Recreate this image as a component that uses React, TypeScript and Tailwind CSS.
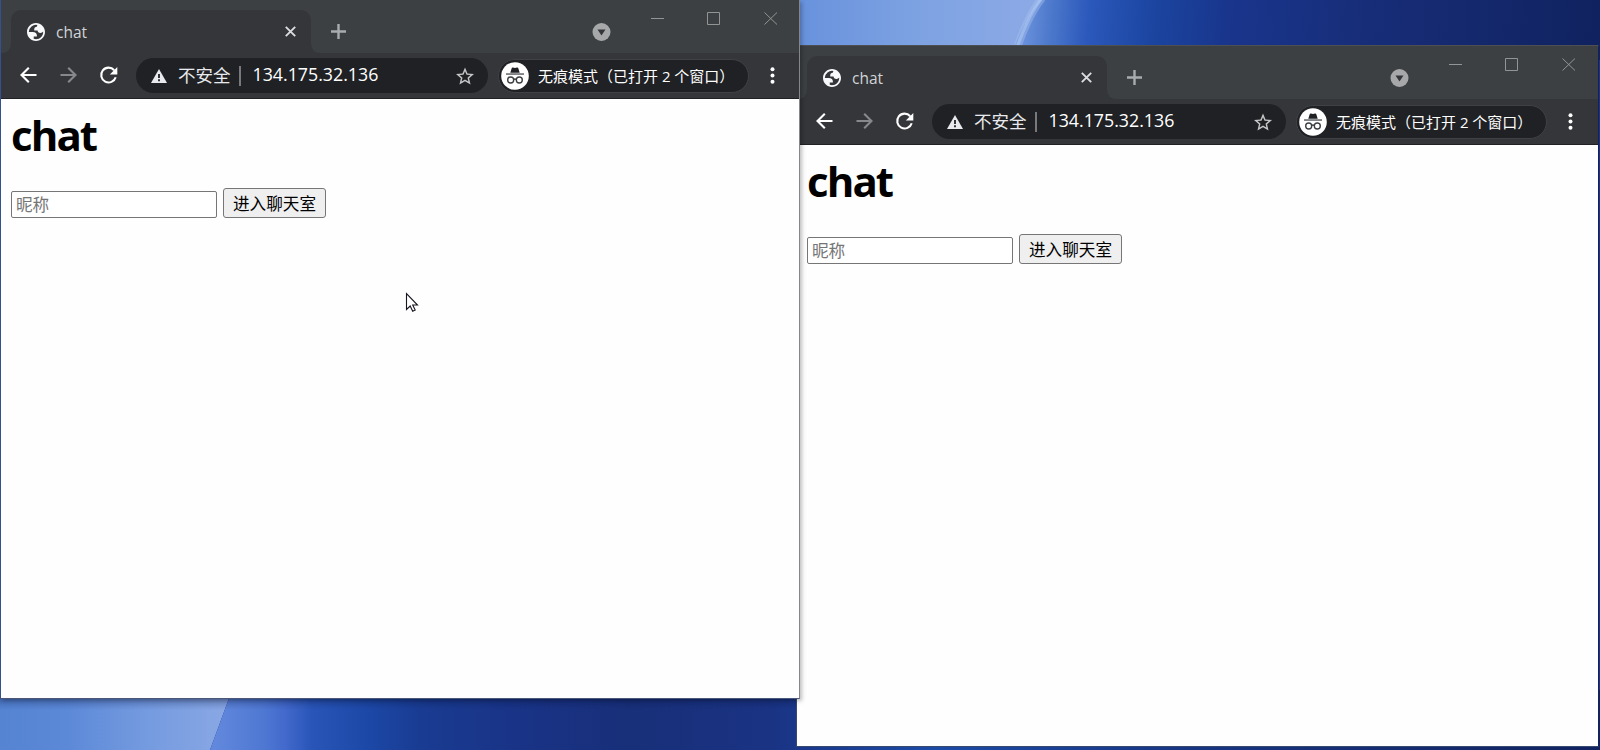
import React from 'react';

const UI = "font-['Open_Sans','Noto_Sans_CJK_SC',sans-serif]";

function Globe() {
  return (
    <svg className="h-[18px] w-[18px] shrink-0" viewBox="2 2 20 20" fill="#f8f9fa">
      <path
        fillRule="evenodd"
        d="M12 2C6.480 2 2 6.480 2 12s4.480 10 10 10 10-4.480 10-10S17.520 2 12 2zM4 12h4.400c3.407.022 4.922 1.730 4.543 5.127H9.488v2.470a8.004 8.004 0 0 0 10.498-8.080C19.327 12.504 18.332 13 17 13c-2.137 0-3.206-.916-3.206-2.750h-3.748c-.274-2.728.683-4.092 2.870-4.092 0-.975.327-1.597.811-1.970A8.004 8.004 0 0 0 4 12z"
      />
    </svg>
  );
}

function Incognito() {
  return (
    <svg className="-ml-px h-7 w-7 shrink-0" viewBox="0 0 28 28">
      <circle cx="14" cy="14" r="13.800" fill="#fff" />
      <path d="M9.300 10.800l1.400-4.600q.3-1 1.300-.7l2 .5 2-.5q1-.3 1.300.7l1.400 4.600z" fill="#202124" />
      <path d="M5 11.300h18v1.500H5z" fill="#5f6368" />
      <g fill="none" stroke="#3c4043" strokeWidth="1.400">
        <circle cx="9.700" cy="18" r="3" />
        <circle cx="18.300" cy="18" r="3" />
        <path d="M12.600 17.500q1.400-1 2.800 0" />
      </g>
    </svg>
  );
}

function WindowControls() {
  return (
    <svg className="mt-3 mr-[21px] h-[13px] w-[127px] shrink-0" viewBox="0 0 127 13" fill="none" stroke="#929594">
      <path d="M0 6.500h13M56.500.5h12v12h-12zM113.500.5l12.500 12M126 .5l-12.500 12" />
    </svg>
  );
}

function TabStrip({ inset }: { inset: string }) {
  return (
    <div className={`flex h-[53px] shrink-0 items-start bg-[#3c4043] ${inset}`}>
      <svg className="mt-[43px] h-[10px] w-[10px] shrink-0" viewBox="0 0 10 10" fill="#35363a">
        <path d="M10 0v10H0Q10 10 10 0z" />
      </svg>
      <div className="mt-[10px] flex h-[43px] w-[300px] shrink-0 items-center rounded-t-[10px] bg-[#35363a] pr-[15px] pl-4">
        <Globe />
        <span className={`ml-[11px] grow pt-[2px] text-[15.500px] leading-none text-[#d2d3d5] ${UI}`}>chat</span>
        <svg className="h-[11px] w-[11px]" viewBox="0 0 11 11" stroke="#dadce0" strokeWidth="1.900">
          <path d="M.8.8l9.400 9.400M10.200.8L.8 10.200" />
        </svg>
      </div>
      <svg className="h-[53px] w-[42px] shrink-0" viewBox="0 0 42 53">
        <path d="M0 43v10h10Q0 53 0 43z" fill="#35363a" />
        <path d="M20 31.500h15M27.500 24v15" stroke="#a9acae" strokeWidth="2.400" />
      </svg>
      <div className="grow" />
      <svg className="mt-[23px] mr-10 h-[18px] w-[19px] shrink-0" viewBox="0 0 19 18">
        <circle cx="9.500" cy="9" r="9" fill="#a7a8aa" />
        <path d="M5.500 6.500h8l-4 6z" fill="#35363a" />
      </svg>
      <WindowControls />
    </div>
  );
}

function Toolbar({ inset }: { inset: string }) {
  return (
    <div className={`flex h-[46px] shrink-0 items-center border-b border-[#202124] bg-[#35363a] ${inset}`}>
      <svg className="h-[45px] w-[135px] shrink-0" viewBox="0 0 135 45" fill="none" strokeWidth="2.100">
        <path d="M35.500 22H20.500M27.800 14.700l-7.300 7.300 7.300 7.300" stroke="#fff" />
        <path d="M59.500 22h15M67.200 14.700l7.300 7.300-7.300 7.300" stroke="#87888b" />
        <path d="M113.200 17.200a7.400 7.400 0 1 0 1.500 7" stroke="#fff" />
        <path d="M116.300 14v7.500h-7.500z" fill="#fff" />
      </svg>
      <div className="flex h-[35px] grow items-center rounded-full bg-[#202124] pr-[14px] pl-[15px]">
        <svg className="h-[14px] w-4 shrink-0" viewBox="0 0 16 14">
          <path d="M8 0l8 14H0z" fill="#e8eaed" />
          <path d="M8 5v4M8 10.300v2" stroke="#202124" strokeWidth="1.800" />
        </svg>
        <span className={`ml-[11px] text-[17.500px] leading-none whitespace-nowrap text-[#e8eaed] ${UI}`}>不安全</span>
        <div className="ml-2 h-5 w-[2px] shrink-0 bg-[#77797c]" />
        <span className={`ml-3 grow pb-px text-[17.800px] leading-none whitespace-nowrap text-white ${UI}`}>134.175.32.136</span>
        <svg className="h-[18px] w-[18px] shrink-0" viewBox="2 2 20 19" fill="#c4c5c7">
          <path d="M22 9.240l-7.190-.62L12 2 9.190 8.630 2 9.240l5.460 4.730L5.820 21 12 17.270 18.180 21l-1.630-7.030L22 9.240zM12 15.400l-3.760 2.270 1-4.280-3.320-2.880 4.380-.38L12 6.100l1.710 4.040 4.380.38-3.320 2.880 1 4.280L12 15.400z" />
        </svg>
      </div>
      <div className="ml-[10px] flex h-[34px] w-[251px] shrink-0 items-center rounded-full border border-[#3f4145] bg-[#202124] pl-[3px]">
        <Incognito />
        <span className={`ml-[9px] pt-[2px] text-[15px] leading-none whitespace-nowrap text-white ${UI}`}>无痕模式（已打开 2 个窗口）</span>
      </div>
      <svg className="mr-6 ml-[21px] h-[17px] w-[5px] shrink-0" viewBox="0 0 5 17" fill="#fff">
        <circle cx="2.500" cy="2.200" r="2" />
        <circle cx="2.500" cy="8.500" r="2" />
        <circle cx="2.500" cy="14.800" r="2" />
      </svg>
    </div>
  );
}

function BrowserWindow({ className, inset = '' }: { className: string; inset?: string }) {
  return (
    <section className={`absolute flex flex-col bg-[#fefefe] ${className}`}>
      <TabStrip inset={inset} />
      <Toolbar inset={inset} />
      <main className={`px-[10px] ${UI}`}>
        <h1 className="mt-[6px] text-[42px] leading-[60px] font-bold tracking-[-1.900px] text-black">chat</h1>
        <div className="mt-[23px] flex items-end gap-[6px]">
          <input
            className="h-[27px] w-[206px] rounded-[2px] border border-[#767676] bg-white px-1 text-[16.600px] placeholder:text-[#757575]"
            placeholder="昵称"
          />
          <button className="h-[30px] w-[103px] rounded-[3px] border border-[#767676] bg-[#efefef] pt-[2px] text-[16.600px] leading-none whitespace-nowrap text-black">
            进入聊天室
          </button>
        </div>
      </main>
    </section>
  );
}

function Desktop() {
  return (
    <div className="flex h-full flex-col justify-between bg-[#1a3384]">
      <svg className="h-[60px] w-full" viewBox="0 0 1600 60" preserveAspectRatio="none">
        <defs>
          <linearGradient id="skyLight" gradientUnits="userSpaceOnUse" x1="800" y1="0" x2="1030" y2="0">
            <stop offset="0" stopColor="#6892dd" />
            <stop offset=".5" stopColor="#7da2e2" />
            <stop offset="1" stopColor="#8ba9e5" />
          </linearGradient>
          <linearGradient id="skyDark" gradientUnits="userSpaceOnUse" x1="1020" y1="0" x2="1600" y2="40">
            <stop offset="0" stopColor="#6f96de" />
            <stop offset=".06" stopColor="#4a76ca" />
            <stop offset=".12" stopColor="#2b58bb" />
            <stop offset=".23" stopColor="#1b45a0" />
            <stop offset=".36" stopColor="#19358c" />
            <stop offset=".6" stopColor="#172d78" />
            <stop offset="1" stopColor="#10225f" />
          </linearGradient>
        </defs>
        <path d="M800 0h245q-20 25-35 60H800z" fill="url(#skyLight)" />
        <path d="M1042 0h558v60h-590q10-35 32-60z" fill="url(#skyDark)" />
        <path d="M1042 -2q-16 20-29 62" fill="none" stroke="#a4bff0" strokeWidth="8" opacity=".45" />
        <path d="M1042 -2q-16 20-29 62" fill="none" stroke="#b4cbf4" strokeWidth="3" opacity=".5" />
      </svg>
      <svg className="h-[60px] w-full" viewBox="0 0 1600 60" preserveAspectRatio="none">
        <defs>
          <linearGradient id="groundLight" gradientUnits="userSpaceOnUse" x1="0" y1="0" x2="230" y2="0">
            <stop offset="0" stopColor="#5584d3" />
            <stop offset=".28" stopColor="#5b88d7" />
            <stop offset=".6" stopColor="#7299df" />
            <stop offset="1" stopColor="#8aa8e4" />
          </linearGradient>
          <linearGradient id="groundDark" gradientUnits="userSpaceOnUse" x1="215" y1="0" x2="1600" y2="0">
            <stop offset="0" stopColor="#6188dc" />
            <stop offset=".035" stopColor="#4f78d3" />
            <stop offset=".05" stopColor="#436acc" />
            <stop offset=".07" stopColor="#2955b8" />
            <stop offset=".11" stopColor="#1c48a7" />
            <stop offset=".15" stopColor="#193b91" />
            <stop offset=".22" stopColor="#193386" />
            <stop offset=".3" stopColor="#182f79" />
            <stop offset=".4" stopColor="#1a3383" />
            <stop offset=".52" stopColor="#1b4ba6" />
            <stop offset=".7" stopColor="#183582" />
            <stop offset="1" stopColor="#10235f" />
          </linearGradient>
          <linearGradient id="windowShade" x1="0" y1="0" x2="0" y2="1">
            <stop offset="0" stopColor="#0b1b50" stopOpacity=".3" />
            <stop offset="1" stopColor="#0b1b50" stopOpacity="0" />
          </linearGradient>
        </defs>
        <path d="M0 0h232l-22 60H0z" fill="url(#groundLight)" />
        <path d="M232 0h1368v60H210z" fill="url(#groundDark)" />
        <path d="M0 8h796v12H0z" fill="url(#windowShade)" />
      </svg>
    </div>
  );
}

export default function App() {
  return (
    <div className="relative h-[750px] w-[1600px] overflow-hidden">
      <Desktop />
      <BrowserWindow
        className="top-[45px] left-[796px] h-[702px] w-[803px] border border-t-[#4c5053] border-r-[#10235f] border-b-[#38496f] border-l-[#38496f]"
        inset="pr-px"
      />
      <BrowserWindow className="top-0 left-0 h-[699px] w-[800px] border-r border-b border-l border-r-[#858687] border-b-[#4a5778] border-l-[#34508f] shadow-[2px_2px_4px_rgba(0,0,0,0.25)]" />
      <svg className="absolute top-[292px] left-[405px] h-[22px] w-[14px]" viewBox="0 0 14 22" fill="#fff" stroke="#15151f" strokeWidth="1.100">
        <path d="M1.500 1.500v16l3.700-3.500 2.500 5.300 2.500-1.200-2.500-5.100h4.800z" />
      </svg>
    </div>
  );
}
